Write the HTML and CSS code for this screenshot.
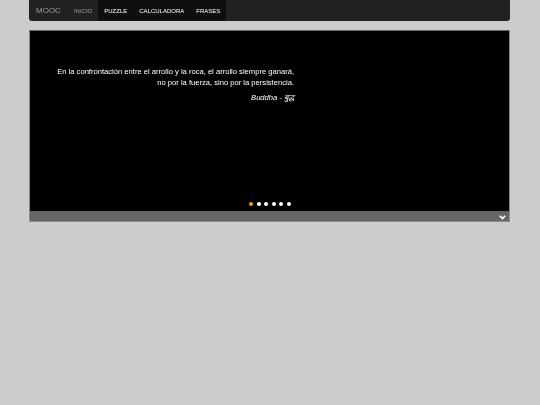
FILE: index.html
```html
<!DOCTYPE html>
<html>
<head>
<meta charset="utf-8">
<link rel="stylesheet" href="styles.css">
</head>
<body>
<div class="page">
  <nav class="navbar">
    <span class="brand">MOOC</span>
    <span class="nav-item muted">INICIO</span>
    <div class="nav-group">
      <span class="nav-item">PUZZLE</span>
      <span class="nav-item">CALCULADORA</span>
      <span class="nav-item">FRASES</span>
    </div>
  </nav>
  <div class="slider">
    <div class="slide">
      <div class="quote">
        <p class="line">En la confrontación entre el arrollo y la roca, el arrollo siempre ganará,</p>
        <p class="line">no por la fuerza, sino por la persistencia.</p>
        <p class="author">Buddha - बुद्ध</p>
      </div>
      <div class="dots">
        <span class="dot active"></span>
        <span class="dot"></span>
        <span class="dot"></span>
        <span class="dot"></span>
        <span class="dot"></span>
        <span class="dot"></span>
      </div>
    </div>
    <div class="bar">
      <svg class="chev" width="7" height="5" viewBox="0 0 7 5"><path d="M0.8 0.8 L3.5 3.6 L6.2 0.8" fill="none" stroke="#fff" stroke-width="1.6"/></svg>
    </div>
  </div>
</div>
</body>
</html>
```

FILE: styles.css
```css
html, body {
  margin: 0;
  padding: 0;
  background: #cccccc;
  font-family: "Liberation Sans", Arial, sans-serif;
  -webkit-font-smoothing: antialiased;
}
.page {
  width: 481px;
  margin-left: 29px;
}
.navbar {
  height: 21px;
  background: #222222;
  border-radius: 0 0 3px 3px;
  display: flex;
  align-items: stretch;
  will-change: transform;
}
.brand {
  color: #9d9d9d;
  font-size: 8px;
  padding: 0 7px 0 7px;
  display: flex;
  align-items: center;
}
.nav-item {
  color: #ffffff;
  font-size: 6px;
  display: flex;
  align-items: center;
  padding: 0 6px;
}
.nav-item.muted {
  color: #9d9d9d;
}
.nav-group {
  display: flex;
  background: #0f0f0f;
}
.slider {
  margin-top: 9px;
  border: 1px solid #8a8a8a;
  border-top-color: #666;
  background: #000;
}
.slide {
  height: 180px;
  background: #000;
  display: flex;
  flex-direction: column;
  position: relative;
}
.quote {
  width: 237px;
  margin-left: 27px;
  margin-top: 35px;
  text-align: right;
  color: #ffffff;
  font-size: 7.6px;
  will-change: transform;
}
.line {
  margin: 0;
  line-height: 11px;
}
.author {
  margin: 4px 0 0 0;
  font-style: italic;
  line-height: 11px;
}
.dots {
  position: absolute;
  left: 219px;
  top: 171px;
  display: flex;
  gap: 3.5px;
}
.dot {
  width: 4px;
  height: 4px;
  border-radius: 50%;
  background: #ffffff;
}
.dot.active {
  background: #f0a030;
}
.bar {
  height: 10px;
  background: #666666;
  display: flex;
  justify-content: flex-end;
  align-items: center;
}
.chev {
  margin-right: 3px;
  margin-top: 2px;
}
```
